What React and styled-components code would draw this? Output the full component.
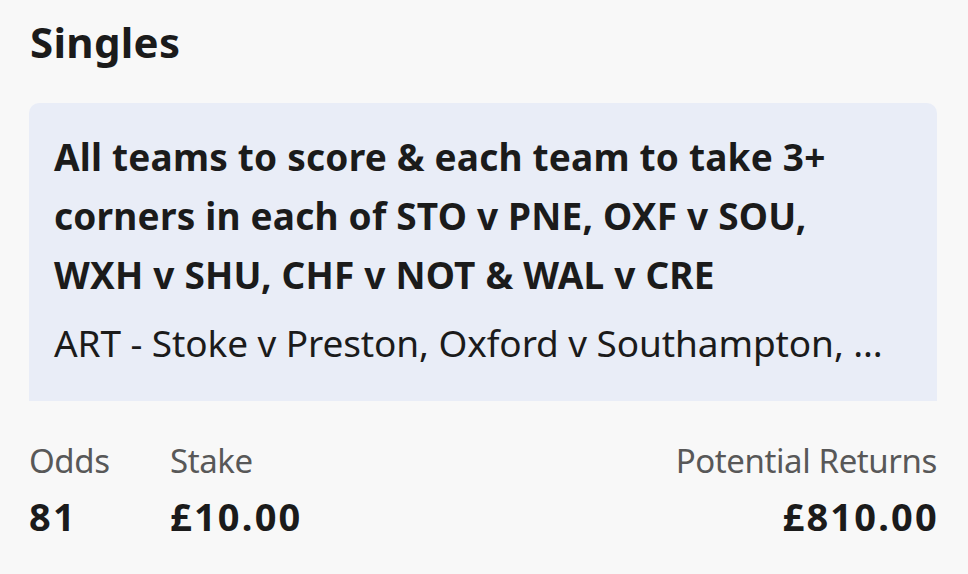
import React from "react";
import styled, { createGlobalStyle } from "styled-components";

const Global = createGlobalStyle`
  html, body {
    margin: 0;
    padding: 0;
    background: #f8f8f8;
  }
  body {
    font-family: "Noto Sans", "Open Sans", sans-serif;
    color: #1b1b1b;
  }
`;

const Slip = styled.div`
  width: 968px;
  height: 574px;
  box-sizing: border-box;
  padding: 16px 31px 0 29px;
  display: flex;
  flex-direction: column;
`;

const Heading = styled.h1`
  margin: 0 0 0 1px;
  font-size: 42px;
  font-weight: 700;
  line-height: 52px;
  letter-spacing: 0.3px;
`;

const Card = styled.div`
  margin-top: 35px;
  background: #e9edf7;
  border-radius: 10px 10px 0 0;
  padding: 24px 25px 36px;
`;

const Market = styled.div`
  font-size: 37px;
  font-weight: 700;
  line-height: 59px;
  letter-spacing: 0.2px;
`;

const Event = styled.div`
  margin-top: 17px;
  font-size: 37px;
  line-height: 44px;
  letter-spacing: -0.1px;
  white-space: nowrap;
`;

const Totals = styled.div`
  margin-top: 40px;
  display: flex;
  align-items: flex-start;
`;

const Col = styled.div`
  display: flex;
  flex-direction: column;
  width: ${(p) => p.$width || "auto"};
  margin-left: ${(p) => (p.$right ? "auto" : "0")};
  align-items: ${(p) => (p.$right ? "flex-end" : "flex-start")};
`;

const Label = styled.span`
  font-size: 33px;
  line-height: 40px;
  color: #585858;
  letter-spacing: -0.4px;
`;

const Value = styled.span`
  margin-top: 10px;
  margin-right: -2px;
  font-size: 38px;
  font-weight: 700;
  line-height: 50px;
  letter-spacing: 2.2px;
`;

export default function App() {
  return (
    <>
      <Global />
      <Slip>
        <Heading>Singles</Heading>
        <Card>
          <Market>
            All teams to score &amp; each team to take 3+
            <br />
            corners in each of STO v PNE, OXF v SOU,
            <br />
            WXH v SHU, CHF v NOT &amp; WAL v CRE
          </Market>
          <Event>ART - Stoke v Preston, Oxford v Southampton, ...</Event>
        </Card>
        <Totals>
          <Col $width="141px">
            <Label>Odds</Label>
            <Value>81</Value>
          </Col>
          <Col>
            <Label>Stake</Label>
            <Value>£10.00</Value>
          </Col>
          <Col $right>
            <Label>Potential Returns</Label>
            <Value>£810.00</Value>
          </Col>
        </Totals>
      </Slip>
    </>
  );
}
